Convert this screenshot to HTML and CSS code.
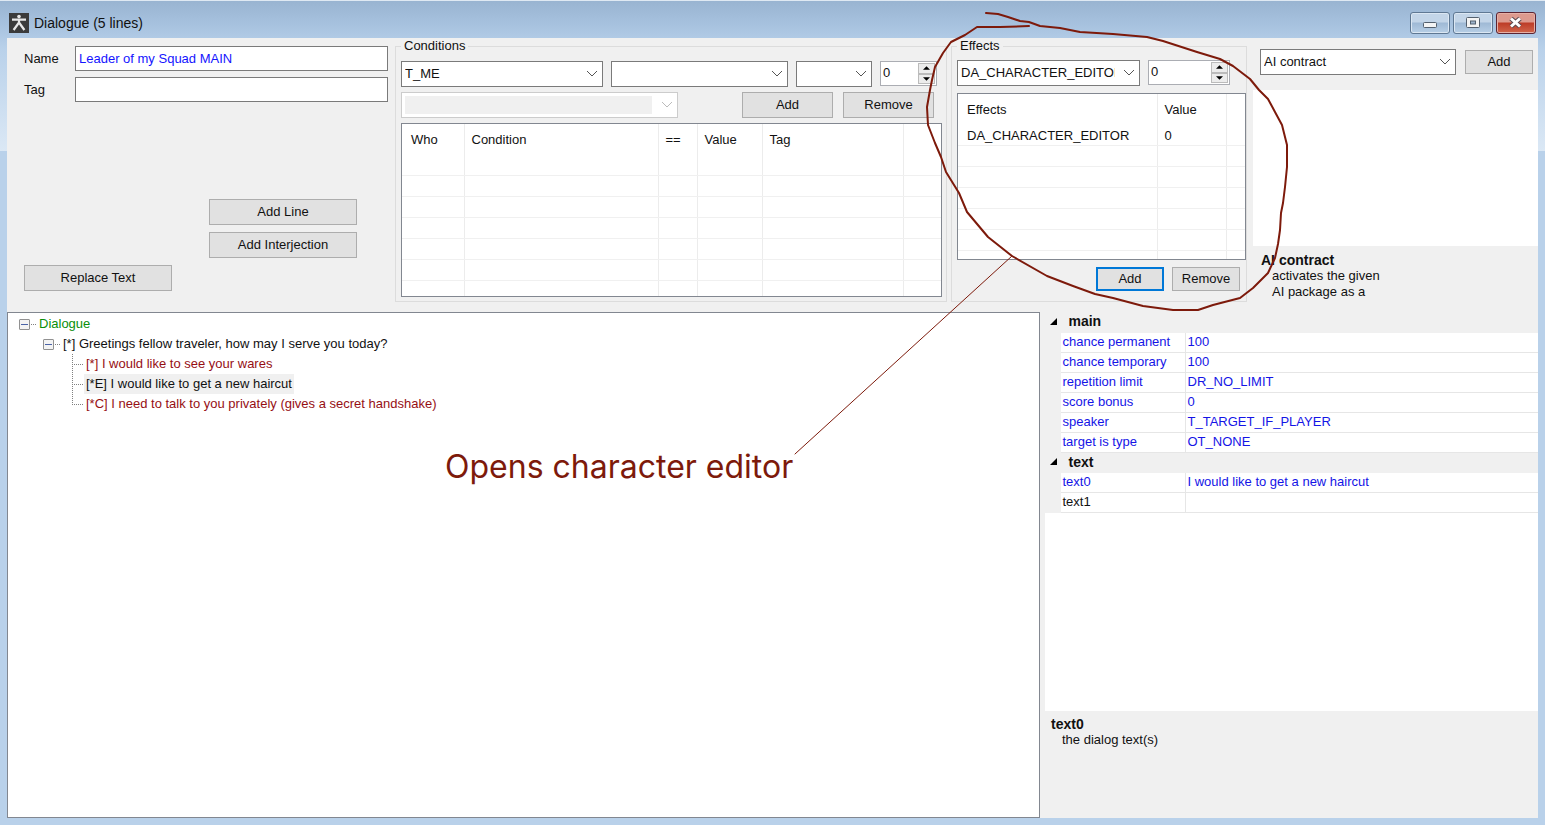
FILE: index.html
```html
<!DOCTYPE html>
<html lang="en">
  <head>
    <meta charset="UTF-8" />
    <meta name="viewport" content="width=device-width, initial-scale=1.0" />
    <title>Dialogue (5 lines)</title>
    <link rel="stylesheet" href="styles.css">
  </head>
  <body>
    <div class="window">
      <header class="titlebar">
        <svg class="app-icon" viewBox="0 0 20 20">
          <rect width="20" height="20" fill="#3b3b3b" />
          <circle cx="10" cy="3.6" r="1.8" fill="#e8e8e8" />
          <path d="M3 6.6h14M10 6v5M10 9.5L4.6 17M10 9.5L15.4 17" stroke="#e8e8e8" stroke-width="2.2" fill="none" />
        </svg>
        <h1>Dialogue (5 lines)</h1>
        <div class="window-buttons">
          <button class="win-btn" aria-label="Minimize">
            <svg viewBox="0 0 38 20"><rect x="12.5" y="9.5" width="13" height="5" rx="1" fill="#f4f4f4" stroke="#54606e" /></svg>
          </button>
          <button class="win-btn" aria-label="Maximize">
            <svg viewBox="0 0 38 20">
              <rect x="12.5" y="4.5" width="13" height="10" rx="1" fill="#f4f4f4" stroke="#54606e" />
              <rect x="16.5" y="8" width="5" height="3" fill="#9db4cc" stroke="#54606e" />
            </svg>
          </button>
          <button class="win-btn close" aria-label="Close">
            <svg viewBox="0 0 38 20">
              <path d="M14 5.5l9 8M23 5.5l-9 8" stroke="#5a4a50" stroke-width="5" />
              <path d="M14 5.5l9 8M23 5.5l-9 8" stroke="#fff" stroke-width="3" />
            </svg>
          </button>
        </div>
      </header>

      <main class="client">
        <section class="top">
          <div class="general">
            <div class="field">
              <label for="name">Name</label>
              <input type="text" id="name" value="Leader of my Squad MAIN" />
            </div>
            <div class="field">
              <label for="tag">Tag</label>
              <input type="text" id="tag" />
            </div>
            <div class="line-actions">
              <button class="btn wide">Add Line</button>
              <button class="btn wide">Add Interjection</button>
              <button class="btn wide replace">Replace Text</button>
            </div>
          </div>

          <fieldset class="conditions">
            <legend>Conditions</legend>
            <div class="row">
              <div class="combo who">
                <select aria-label="Who"><option>T_ME</option></select>
                <svg viewBox="0 0 12 8"><path d="M1 1l5 5 5-5" /></svg>
              </div>
              <div class="combo condition">
                <select aria-label="Condition"><option></option></select>
                <svg viewBox="0 0 12 8"><path d="M1 1l5 5 5-5" /></svg>
              </div>
              <div class="combo compare">
                <select aria-label="Comparison"><option></option></select>
                <svg viewBox="0 0 12 8"><path d="M1 1l5 5 5-5" /></svg>
              </div>
              <div class="spin short">
                <input type="number" value="0" aria-label="Condition value" />
                <div class="arrows">
                  <button aria-label="Increase"><svg viewBox="0 0 8 4"><path d="M0 4l4-4 4 4z" /></svg></button>
                  <button aria-label="Decrease"><svg viewBox="0 0 8 4"><path d="M0 0l4 4 4-4z" /></svg></button>
                </div>
              </div>
            </div>
            <div class="row">
              <div class="combo tag disabled">
                <select aria-label="Condition tag" disabled><option></option></select>
                <svg viewBox="0 0 12 8"><path d="M1 1l5 5 5-5" /></svg>
              </div>
              <div class="row-buttons">
                <button class="btn medium">Add</button>
                <button class="btn medium">Remove</button>
              </div>
            </div>
            <div class="list">
              <table>
                <colgroup>
                  <col class="c-who" /><col class="c-cond" /><col class="c-eq" /><col class="c-val" /><col class="c-tag" /><col />
                </colgroup>
                <thead>
                  <tr><th>Who</th><th>Condition</th><th>==</th><th>Value</th><th>Tag</th><th></th></tr>
                </thead>
                <tbody>
                  <tr><td></td><td></td><td></td><td></td><td></td><td></td></tr>
                  <tr><td></td><td></td><td></td><td></td><td></td><td></td></tr>
                  <tr><td></td><td></td><td></td><td></td><td></td><td></td></tr>
                  <tr><td></td><td></td><td></td><td></td><td></td><td></td></tr>
                  <tr><td></td><td></td><td></td><td></td><td></td><td></td></tr>
                  <tr><td></td><td></td><td></td><td></td><td></td><td></td></tr>
                  <tr><td></td><td></td><td></td><td></td><td></td><td></td></tr>
                </tbody>
              </table>
            </div>
          </fieldset>

          <fieldset class="effects">
            <legend>Effects</legend>
            <div class="row">
              <div class="combo effect">
                <select aria-label="Effect"><option>DA_CHARACTER_EDITOR</option></select>
                <svg viewBox="0 0 12 8"><path d="M1 1l5 5 5-5" /></svg>
              </div>
              <div class="spin long">
                <input type="number" value="0" aria-label="Effect value" />
                <div class="arrows">
                  <button aria-label="Increase"><svg viewBox="0 0 8 4"><path d="M0 4l4-4 4 4z" /></svg></button>
                  <button aria-label="Decrease"><svg viewBox="0 0 8 4"><path d="M0 0l4 4 4-4z" /></svg></button>
                </div>
              </div>
            </div>
            <div class="list">
              <table>
                <colgroup><col class="c-effect" /><col class="c-num" /><col /></colgroup>
                <thead>
                  <tr><th>Effects</th><th>Value</th><th></th></tr>
                </thead>
                <tbody>
                  <tr><td>DA_CHARACTER_EDITOR</td><td>0</td><td></td></tr>
                  <tr><td></td><td></td><td></td></tr>
                  <tr><td></td><td></td><td></td></tr>
                  <tr><td></td><td></td><td></td></tr>
                  <tr><td></td><td></td><td></td></tr>
                  <tr><td></td><td></td><td></td></tr>
                  <tr><td></td><td></td><td></td></tr>
                </tbody>
              </table>
            </div>
            <div class="effect-actions">
              <button class="btn small default">Add</button>
              <button class="btn small">Remove</button>
            </div>
          </fieldset>

          <div class="packages">
            <div class="package-row">
              <div class="combo">
                <select aria-label="Package"><option>AI contract</option></select>
                <svg viewBox="0 0 12 8"><path d="M1 1l5 5 5-5" /></svg>
              </div>
              <button class="btn small">Add</button>
            </div>
            <div class="package-list"></div>
            <div class="help package-help">
              <h2>AI contract</h2>
              <p>activates the given<br />AI package as a</p>
            </div>
          </div>
        </section>

        <section class="bottom">
          <ul class="tree">
            <li>
              <div class="node root"><button class="toggle" aria-label="Collapse"></button><span class="dots"></span><span>Dialogue</span></div>
              <ul>
                <li>
                  <div class="node"><button class="toggle" aria-label="Collapse"></button><span class="dots"></span><span>[*] Greetings fellow traveler, how may I serve you today?</span></div>
                  <ul class="leaves">
                    <li class="leaf"><span class="branch"></span><span class="text">[*] I would like to see your wares</span></li>
                    <li class="leaf selected"><span class="branch"></span><span class="text">[*E] I would like to get a new haircut</span></li>
                    <li class="leaf"><span class="branch last"></span><span class="text">[*C] I need to talk to you privately (gives a secret handshake)</span></li>
                  </ul>
                </li>
              </ul>
            </li>
          </ul>

          <div class="properties">
            <div class="grid">
              <table>
                <colgroup><col class="c-gutter" /><col class="c-key" /><col /></colgroup>
                <tbody>
                  <tr class="group"><th><svg viewBox="0 0 6 6"><path d="M6 0v6H0z" /></svg></th><th colspan="2">main</th></tr>
                  <tr><td></td><td>chance permanent</td><td>100</td></tr>
                  <tr><td></td><td>chance temporary</td><td>100</td></tr>
                  <tr><td></td><td>repetition limit</td><td>DR_NO_LIMIT</td></tr>
                  <tr><td></td><td>score bonus</td><td>0</td></tr>
                  <tr><td></td><td>speaker</td><td>T_TARGET_IF_PLAYER</td></tr>
                  <tr><td></td><td>target is type</td><td>OT_NONE</td></tr>
                  <tr class="group"><th><svg viewBox="0 0 6 6"><path d="M6 0v6H0z" /></svg></th><th colspan="2">text</th></tr>
                  <tr><td></td><td>text0</td><td>I would like to get a new haircut</td></tr>
                  <tr class="unset"><td></td><td>text1</td><td></td></tr>
                </tbody>
              </table>
            </div>
            <div class="help property-help">
              <h2>text0</h2>
              <p>the dialog text(s)</p>
            </div>
          </div>
        </section>
      </main>
    </div>

    <!-- hand-drawn note over the window -->
    <svg class="marker" width="1545" height="825" viewBox="0 0 1545 825">
      <path class="loop" d="M986 13L998 14L1008 17L1020 21L1029 22L1040 26L1060 28L1080 32L1113 34L1147 37L1163 41L1197 52L1220 59L1233 66L1250 79L1259 90L1268 99L1275 112L1282 125L1287 145L1287 167L1285 187L1283 203L1281 213L1280 230L1278 244L1275 258L1268 273L1253 288L1240 298L1213 305L1198 310L1173 310L1143 306L1113 298L1095 294L1073 286L1047 276L1012 256L988 237L967 212L959 193L946 172L941 157L935 143L928 125L927 107L930 90L932 80L935 67L943 53L951 42L965 35L977 27L1000 27L1029 26" />
      <path class="pointer" d="M1012 256L795 454" />
    </svg>
    <p class="note">Opens character editor</p>
  </body>
</html>
```
FILE: styles.css
```css
* {
  box-sizing: border-box;
}
body {
  margin: 0;
  font-family: "Liberation Sans", Arial, sans-serif;
  font-size: 14px;
  line-height: 16px;
  color: #111;
}
h1,
h2,
p,
ul {
  margin: 0;
  padding: 0;
}
h1,
h2 {
  font-size: 14px;
}
ul {
  list-style: none;
}
input,
select,
button {
  font: inherit;
  color: inherit;
}
.window {
  position: relative;
  display: flex;
  flex-direction: column;
  min-height: 100vh;
  padding: 0 7px 7px;
  border-top: 1px solid #dfe9f3;
  background: linear-gradient(#99b4d1, #a7c2df 24px, #b9d1ea 48px, #dbe8f5 150px, #b9d1ea 150px);
}

/* title bar */
.titlebar {
  display: flex;
  align-items: center;
  height: 37px;
  padding: 6px 2px 0;
}
.titlebar h1 {
  margin-left: 5px;
  font-weight: normal;
}
.app-icon {
  width: 20px;
  height: 20px;
}
.window-buttons {
  display: flex;
  gap: 3px;
  margin-left: auto;
}
.win-btn {
  width: 40px;
  height: 22px;
  padding: 0;
  border: 1px solid #5f7893;
  border-radius: 3px;
  background: linear-gradient(#c3d5e8 45%, #9fb9d5 50%, #b8cfe6);
  box-shadow: inset 0 0 0 1px #dbe7f3;
}
.win-btn svg {
  display: block;
  width: 38px;
  height: 20px;
}
.win-btn.close {
  border-color: #5c2432;
  background: linear-gradient(#dd9a8e 45%, #bd3c27 50%, #d0664c);
  box-shadow: inset 0 0 0 1px #e6b0a6;
}

/* client area */
.client {
  flex: 1;
  display: flex;
  flex-direction: column;
  font-size: 13px;
  background: #f0f0f0;
}
.top {
  display: grid;
  grid-template-columns: 388px 552px 300px 1fr;
  grid-template-rows: 100%;
  height: 274px;
}
.general {
  display: flex;
  flex-direction: column;
  gap: 6px;
  padding: 8px 7px 21px 17px;
}
.field {
  display: flex;
  align-items: center;
}
.field label {
  width: 51px;
}
.field input {
  flex: 1;
  min-width: 0;
  height: 25px;
  padding: 0 3px;
  border: 1px solid #7a7a7a;
  background: #fff;
  color: #1414ff;
}
.line-actions {
  display: flex;
  flex-direction: column;
  align-items: flex-end;
  gap: 7px;
  margin-top: auto;
  padding-right: 31px;
}
.btn {
  height: 26px;
  padding: 0;
  border: 1px solid #adadad;
  background: #e1e1e1;
}
.btn.wide {
  width: 148px;
}
.btn.medium {
  width: 91px;
}
.btn.small {
  width: 68px;
  height: 24px;
}
.btn.replace {
  align-self: flex-start;
}
.btn.default {
  border: 2px solid #0078d7;
}

fieldset {
  display: flex;
  flex-direction: column;
  min-width: 0;
  min-height: 0;
  margin: 0;
  padding: 7px 4px 4px 5px;
  border: 1px solid #dcdcdc;
}
fieldset legend {
  padding: 0 3px;
}
.conditions {
  gap: 5px;
  margin-bottom: 10px;
}
.effects {
  gap: 7px;
  margin: 0 0 10px 4px;
  padding: 6px 0 0 5px;
}
.row {
  display: flex;
  gap: 8px;
}
.row-buttons {
  display: flex;
  gap: 10px;
  margin: 0 8px 0 auto;
}

/* drop-downs */
.combo {
  position: relative;
  height: 26px;
}
.combo select {
  appearance: none;
  width: 100%;
  height: 100%;
  padding: 0 24px 0 3px;
  border: 1px solid #7a7a7a;
  border-radius: 0;
  background: #fff;
  opacity: 1;
}
.combo svg {
  position: absolute;
  top: 9px;
  right: 5px;
  width: 12px;
  height: 8px;
  fill: none;
  stroke: #555;
  pointer-events: none;
}
.combo.who {
  width: 202px;
}
.combo.condition {
  width: 177px;
}
.combo.compare {
  width: 76px;
}
.combo.tag {
  width: 277px;
}
.combo.effect {
  width: 183px;
}
.combo.disabled select {
  padding: 0;
  border-color: #ccc;
  background: linear-gradient(#f0f0f0, #f0f0f0) 3px 3px / calc(100% - 28px) calc(100% - 6px) no-repeat #fff;
}
.combo.disabled svg {
  stroke: #bbb;
}

/* number boxes */
.spin {
  display: flex;
  height: 25px;
  padding: 1px;
  border: 1px solid #abadb3;
  background: #fff;
}
.spin.short {
  width: 57px;
}
.spin.long {
  width: 82px;
}
.spin input {
  appearance: textfield;
  flex: 1;
  min-width: 0;
  padding: 0 0 2px 1px;
  border: 0;
}
.spin input::-webkit-inner-spin-button {
  display: none;
}
.arrows {
  display: flex;
  flex-direction: column;
  width: 17px;
}
.arrows button {
  display: flex;
  flex: 1;
  align-items: center;
  justify-content: center;
  padding: 0;
  border: 1px solid #bbb;
  background: #ececec;
}
.arrows svg {
  width: 7px;
  height: 4px;
}

/* list views */
table {
  width: 100%;
  table-layout: fixed;
  border-collapse: collapse;
}
.list {
  flex: 1;
  min-height: 0;
  overflow: hidden;
  border: 1px solid #828790;
  background: #fff;
}
.list th,
.list td {
  padding: 1px 0 0 7px;
  border-right: 1px solid #ececec;
  text-align: left;
  font-weight: normal;
  white-space: nowrap;
}
.list th:first-child,
.list td:first-child {
  padding-left: 9px;
}
.list th:last-child,
.list td:last-child {
  border-right: 0;
}
.list th {
  height: 30px;
}
.list td {
  height: 21px;
  padding-top: 3px;
  border-bottom: 1px solid #f0f0f0;
}
.c-who {
  width: 62px;
}
.c-cond {
  width: 194px;
}
.c-eq {
  width: 39px;
}
.c-val {
  width: 65px;
}
.c-tag {
  width: 141px;
}
.c-effect {
  width: 199px;
}
.c-num {
  width: 69px;
}
.effect-actions {
  display: flex;
  justify-content: flex-end;
  gap: 8px;
  padding: 0 6px 10px 0;
}

/* AI packages */
.packages {
  display: flex;
  flex-direction: column;
  min-width: 0;
  margin-left: 6px;
}
.package-row {
  display: flex;
  align-items: center;
  gap: 9px;
  padding: 11px 5px 15px 7px;
}
.package-row .combo {
  flex: 1;
}
.package-list {
  height: 156px;
  background: #fff;
}
.help p {
  padding-left: 11px;
}
.package-help {
  padding: 6px 0 0 8px;
}

/* dialogue tree */
.bottom {
  flex: 1;
  display: flex;
}
.tree {
  flex: 1;
  min-width: 0;
  padding: 1px 0 0 11px;
  border: 1px solid #828790;
  background: #fff;
}
.tree ul {
  padding-left: 24px;
}
.tree ul.leaves {
  padding-left: 29px;
}
.node,
.leaf {
  display: flex;
  align-items: center;
  height: 20px;
  white-space: nowrap;
}
.root {
  color: #0a8f0a;
}
.toggle {
  width: 11px;
  height: 11px;
  padding: 0;
  border: 1px solid #919191;
  border-radius: 1px;
  background: linear-gradient(#4b63a7, #4b63a7) center / 7px 1px no-repeat #f3f3f3;
}
.dots {
  width: 5px;
  margin: 0 3px 0 1px;
  border-top: 1px dotted #808080;
}
.branch {
  width: 12px;
  height: 20px;
  background:
    repeating-linear-gradient(#808080 0 1px, transparent 1px 2px) 0 0 / 1px 100% no-repeat,
    repeating-linear-gradient(90deg, #808080 0 1px, transparent 1px 2px) 0 10px / 100% 1px no-repeat;
}
.branch.last {
  background-size: 1px 10px, 100% 1px;
}
.leaf .text {
  padding: 2px;
  color: #960f14;
}
.leaf.selected .text {
  background: #f0f0f0;
  color: #111;
}

/* property grid */
.properties {
  display: flex;
  flex-direction: column;
  width: 498px;
  padding-left: 5px;
}
.grid {
  flex: 1;
  background: #fff;
}
.grid td,
.grid th {
  height: 20px;
  padding: 0 0 1px 2px;
  border: 1px solid #e6e6e6;
  border-width: 0 1px 1px 0;
  text-align: left;
  white-space: nowrap;
}
.grid td {
  color: #1414e6;
}
.grid td:last-child {
  border-right: 0;
}
.grid td:first-child,
.grid .group th {
  border-color: #f0f0f0;
  background: #f0f0f0;
  font-size: 14px;
}
.grid .group th:first-child {
  padding-left: 5px;
}
.grid .group th:last-child {
  padding-left: 8px;
}
.grid th svg {
  display: block;
  width: 7px;
  height: 7px;
}
.grid .unset td {
  color: #111;
}
.c-gutter {
  width: 15px;
}
.c-key {
  width: 125px;
}
.property-help {
  height: 107px;
  padding: 5px 6px;
}

/* annotation */
.marker {
  position: absolute;
  top: 0;
  left: 0;
  fill: none;
  stroke: #7d1a0b;
  stroke-linejoin: round;
  stroke-linecap: round;
  pointer-events: none;
}
.loop {
  stroke-width: 2;
}
.pointer {
  stroke-width: 1;
}
.note {
  position: absolute;
  top: 448px;
  left: 445px;
  font-family: Inter, sans-serif;
  font-size: 32px;
  line-height: 38px;
  color: #7d1a0b;
  white-space: nowrap;
}
```
